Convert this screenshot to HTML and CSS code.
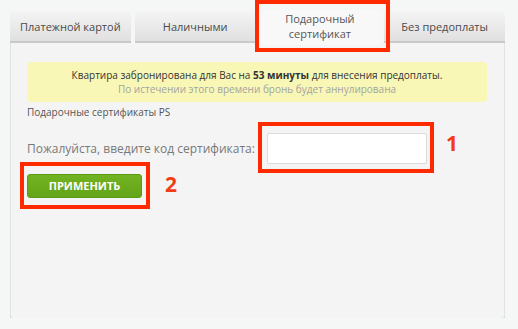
FILE: index.html
```html
<!DOCTYPE html>
<html lang="ru">
<head>
    <meta charset="UTF-8">
    <meta name="viewport" content="width=device-width, initial-scale=1.0">
    <title>Оплата бронирования</title>
    <link rel="stylesheet" href="styles.css">
</head>
<body>
    <div class="wrap">
        <ul class="tabs">
            <li class="tab">Платежной картой</li>
            <li class="tab">Наличными</li>
            <li class="tab active">Подарочный<br>сертификат
                <span class="mark mark-tab"></span>
            </li>
            <li class="tab">Без предоплаты</li>
        </ul>

        <div class="panel">
            <div class="notice">
                <p>Квартира забронирована для Вас на <strong>53 минуты</strong> для внесения предоплаты.</p>
                <p class="muted">По истечении этого времени бронь будет аннулирована</p>
            </div>

            <div class="caption">Подарочные сертификаты PS</div>

            <div class="code-row">
                <label for="code">Пожалуйста, введите код сертификата:</label>
                <div class="field">
                    <input type="text" id="code">
                    <span class="mark mark-input"></span>
                    <span class="num num-1">1</span>
                </div>
            </div>

            <div class="actions">
                <button type="button">ПРИМЕНИТЬ</button>
                <span class="mark mark-btn"></span>
                <span class="num num-2">2</span>
            </div>
        </div>
    </div>
</body>
</html>
```

FILE: styles.css
```css
body {
    margin: 0;
    padding: 0;
    background-color: #f5f6f6;
    font-family: 'Open Sans', sans-serif;
    color: #444;
}
.wrap {
    width: 495px;
    padding: 11px 0 0 10px;
}
.tabs {
    list-style: none;
    margin: 0;
    padding: 0;
    display: flex;
    gap: 4px;
    height: 32px;
    position: relative;
    z-index: 2;
}
.tab {
    flex: 1;
    display: flex;
    align-items: center;
    justify-content: center;
    font-size: 11px;
    color: #4a4a4a;
    background: linear-gradient(#f4f4f4, #e0e0e0);
    border-bottom: 2px solid #c9c9c9;
    border-radius: 4px 4px 0 0;
    box-sizing: border-box;
}
.tab.active {
    position: relative;
    background: #f8f8f8;
    border-bottom: none;
    height: 35px;
    line-height: 15px;
    text-align: center;
    margin-top: -1px;
    padding-bottom: 3px;
    color: #555;
}
.panel {
    position: relative;
    height: 275px;
    box-sizing: border-box;
    background: #f4f4f4;
    border-left: 1px solid #e2e2e2;
    border-right: 1px solid #e2e2e2;
    box-shadow: 0 2px 0 #d3d3d3;
    border-radius: 0 0 3px 3px;
    padding: 19px 17px 0 16px;
}
.notice {
    background: #f8f7b6;
    border-radius: 4px;
    height: 40px;
    box-sizing: border-box;
    padding-top: 6px;
    text-align: center;
    font-size: 10px;
    line-height: 14px;
    color: #333;
}
.notice p {
    margin: 0;
}
.notice .muted {
    color: #a3a3a3;
}
.caption {
    font-size: 10px;
    color: #555;
    margin-top: 3px;
}
.code-row {
    display: flex;
    align-items: center;
    margin-top: 14px;
    gap: 20px;
}
.code-row label {
    width: 220px;
    font-size: 12px;
    color: #787878;
    white-space: nowrap;
}
.field {
    position: relative;
}
.field input {
    display: block;
    width: 160px;
    height: 31px;
    box-sizing: border-box;
    border: 1px solid #dcdcdc;
    border-radius: 2px;
    background: #fff;
    margin: 0;
}
.actions {
    position: relative;
    margin-top: 9px;
}
button {
    width: 115px;
    height: 24px;
    border: 1px solid #5c9a16;
    border-radius: 3px;
    background: linear-gradient(#72b322, #64a418);
    color: #fff;
    font-family: 'Open Sans', sans-serif;
    font-weight: bold;
    font-size: 11px;
    cursor: pointer;
}
.mark {
    position: absolute;
    border: 4px solid #ff2a00;
    pointer-events: none;
}
.mark-tab {
    left: -5px;
    top: -10px;
    width: 127px;
    height: 44px;
}
.mark-input {
    left: -9px;
    top: -11px;
    width: 168px;
    height: 43px;
}
.mark-btn {
    left: -7px;
    top: -11px;
    width: 122px;
    height: 39px;
}
.num {
    position: absolute;
    color: #f23c16;
    font-family: 'Open Sans', sans-serif;
    font-weight: bold;
    font-size: 21px;
    line-height: 1;
}
.num-1 {
    left: 179px;
    top: 0;
}
.num-2 {
    left: 138px;
    top: 1px;
}
```
